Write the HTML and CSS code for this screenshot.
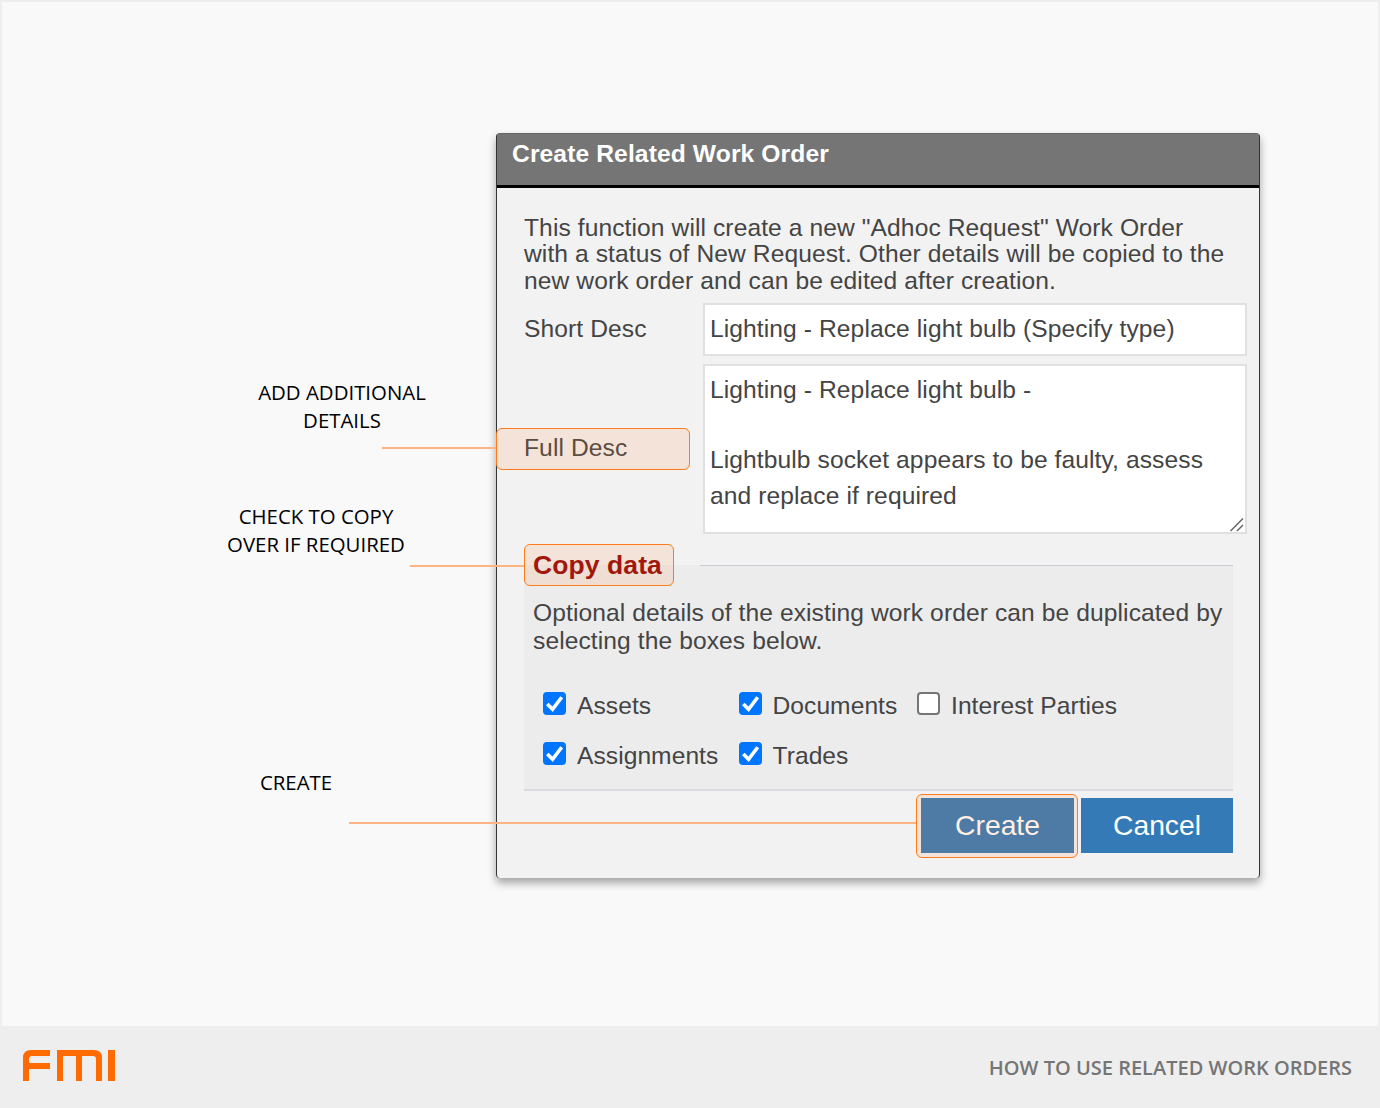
FILE: index.html
```html
<!DOCTYPE html>
<html lang="en">
<head>
<meta charset="utf-8">
<title>How to use related work orders</title>
<link rel="stylesheet" href="styles.css">
</head>
<body>
<div class="page">
  <main class="stage">
    <section class="dialog">
      <h1 class="dialog-title">Create Related Work Order</h1>
      <div class="dialog-body">
        <p class="intro">This function will create a new "Adhoc Request" Work Order with a status of New Request. Other details will be copied to the new work order and can be edited after creation.</p>
        <div class="form-grid">
          <label class="form-label" for="short">Short Desc</label>
          <input class="field field-short" id="short" type="text" value="Lighting - Replace light bulb (Specify type)">
          <label class="form-label" for="full">Full Desc</label>
          <div class="area-wrap">
            <textarea class="field field-full" id="full">Lighting - Replace light bulb - 

Lightbulb socket appears to be faulty, assess and replace if required</textarea>
            <svg class="resizer" viewBox="0 0 14 14" width="14" height="14" aria-hidden="true"><path d="M.5 13 13 .5M7 13 13 7" fill="none" stroke="#666" stroke-width="1.5"/></svg>
          </div>
        </div>
        <fieldset class="copy">
          <legend class="copy-legend"><span class="copy-title">Copy data</span></legend>
          <p class="copy-text">Optional details of the existing work order can be duplicated by selecting the boxes below.</p>
          <div class="checks">
            <label class="check"><input type="checkbox" checked>Assets</label>
            <label class="check"><input type="checkbox" checked>Documents</label>
            <label class="check"><input type="checkbox">Interest Parties</label>
            <label class="check"><input type="checkbox" checked>Assignments</label>
            <label class="check"><input type="checkbox" checked>Trades</label>
          </div>
        </fieldset>
        <div class="actions">
          <button class="btn btn-create" type="button">Create</button>
          <button class="btn btn-cancel" type="button">Cancel</button>
        </div>
      </div>
    </section>
  </main>
  <footer class="footer">
    <svg class="logo" viewBox="0 0 92 31" width="92" height="31" role="img" aria-label="FMI"><path fill="#ff6b00" d="M0 31V8Q0 0 8 0H27V6H9Q6 6 6 9V13H27V19H6V31ZM34 31V0H71Q79 0 79 8V31H73V9Q73 6 70 6H59V31H53V6H40V31ZM85 0H92V31H85Z"/></svg>
    <span class="footer-title">HOW TO USE RELATED WORK ORDERS</span>
  </footer>

  <div class="note note-details">ADD ADDITIONAL<br>DETAILS</div>
  <div class="note note-copy">CHECK TO COPY<br>OVER IF REQUIRED</div>
  <div class="note note-create">CREATE</div>
  <div class="wire wire-details"></div>
  <div class="wire wire-copy"></div>
  <div class="wire wire-create"></div>
  <div class="mark mark-full"></div>
  <div class="mark mark-copy"></div>
  <div class="mark mark-create"></div>
</div>
</body>
</html>
```
FILE: styles.css
```css
* { box-sizing: border-box; }
html, body { margin: 0; padding: 0; }
body { background: #eee; font-family: "Liberation Sans", Arial, sans-serif; color: #444; }

.page { position: relative; width: 1380px; height: 1108px; display: flex; flex-direction: column; overflow: hidden; }
.stage { flex: 1; margin: 2px 2px 0; padding: 131px 0 0 494px; background: #f9f9f9; }

.dialog { width: 764px; height: 745px; display: flex; flex-direction: column; background: #f2f2f2; border: 1px solid #333; border-top-color: #666; border-bottom: 0; border-radius: 4px; box-shadow: 0 5px 9px rgba(0,0,0,.35); }
.dialog-title { margin: 0; height: 54px; padding: 5px 0 0 15px; background: #757575; border-bottom: 3px solid #000; color: #fff; font-size: 24.6px; letter-spacing: .12px; line-height: 30px; font-weight: 700; }
.dialog-body { padding: 27px 12px 0 27px; letter-spacing: .09px; }

.intro { margin: 0 0 8.8px; max-width: 705px; font-size: 24.6px; line-height: 26.4px; }

.form-grid { display: grid; grid-template-columns: 179px 544px; row-gap: 8px; align-items: center; }
.form-label { padding-bottom: 2px; font-size: 24.6px; line-height: 26px; }
.field { display: block; width: 100%; margin: 0; background: #fff; border: 2px solid #e0e0e0; border-radius: 0; outline: 0; color: #444; font-family: inherit; font-size: 24.6px; letter-spacing: .09px; }
.field-short { height: 53px; padding: 0 5px 2px; }
.field-full { height: 170px; padding: 6px 5px; line-height: 35.2px; resize: none; overflow: hidden; }
.area-wrap { position: relative; }
.resizer { position: absolute; right: 3px; bottom: 2px; }

.copy { margin: 10px 0 0; padding: 0 0 9px; width: 709px; min-width: 0; background: #ececec; border: 0; border-top: 1px solid #ccccd4; border-bottom: 2px solid #d9d9df; }
.copy-legend { width: 176px; height: 42px; padding: 0; }
.copy-title { display: block; padding-left: 9px; color: #940808; font-size: 26.5px; line-height: 42px; font-weight: 700; }
.copy-text { margin: 13px 0 25px; padding: 0 9px; font-size: 24.6px; line-height: 28px; }

.checks { display: grid; grid-template-columns: 195.5px 178.5px 1fr; padding-left: 19px; }
.check { display: flex; align-items: center; height: 50px; padding-top: 1px; font-size: 24.6px; letter-spacing: .05px; }
.check input { appearance: none; width: 23px; height: 23px; margin: -4px 11px 0 0; flex: none; background: #fff; border: 2px solid #767676; border-radius: 4px; }
.check input:checked { border: 0; background: #0075ff url("data:image/svg+xml,%3Csvg xmlns='http://www.w3.org/2000/svg' viewBox='0 0 24 24'%3E%3Cpath d='M4.5 12.5 10 18 19.5 5.5' fill='none' stroke='%23fff' stroke-width='3.8'/%3E%3C/svg%3E") center / 100% 100% no-repeat; }

.actions { display: flex; justify-content: flex-end; gap: 7px; margin: 7px 0 0; width: 709px; }
.btn { height: 55px; border: 0; padding: 0 0 1px; color: #fff; background: #337ab7; font-family: inherit; font-size: 28.3px; }
.btn-create { width: 153px; }
.btn-cancel { width: 152px; }

.footer { height: 82px; display: flex; align-items: center; justify-content: space-between; padding: 0 28px 0 23px; background: #eee; }
.logo { display: block; margin-top: -3px; }
.footer-title { font-family: "Open Sans", sans-serif; font-size: 20px; font-weight: 600; color: #757575; }

.note { position: absolute; font-family: "Open Sans", sans-serif; font-size: 20.4px; font-weight: 500; line-height: 28px; color: #000; text-align: center; white-space: nowrap; transform: translateX(-50%); }
.note-details { left: 342px; top: 378px; }
.note-copy { left: 316px; top: 502px; }
.note-create { left: 296px; top: 768px; }

.wire { position: absolute; height: 2px; background: #fbb584; }
.wire-details { left: 382px; width: 114px; top: 447px; }
.wire-copy { left: 410px; width: 114px; top: 565px; }
.wire-create { left: 349px; width: 567px; top: 822px; }

.mark { position: absolute; background: rgba(255,133,49,.13); border: 1px solid #ff7a1a; border-radius: 6px; }
.mark-full { left: 496px; top: 428px; width: 194px; height: 42px; }
.mark-copy { left: 524px; top: 544px; width: 150px; height: 42px; }
.mark-create { left: 916px; top: 794px; width: 162px; height: 64px; }
```
